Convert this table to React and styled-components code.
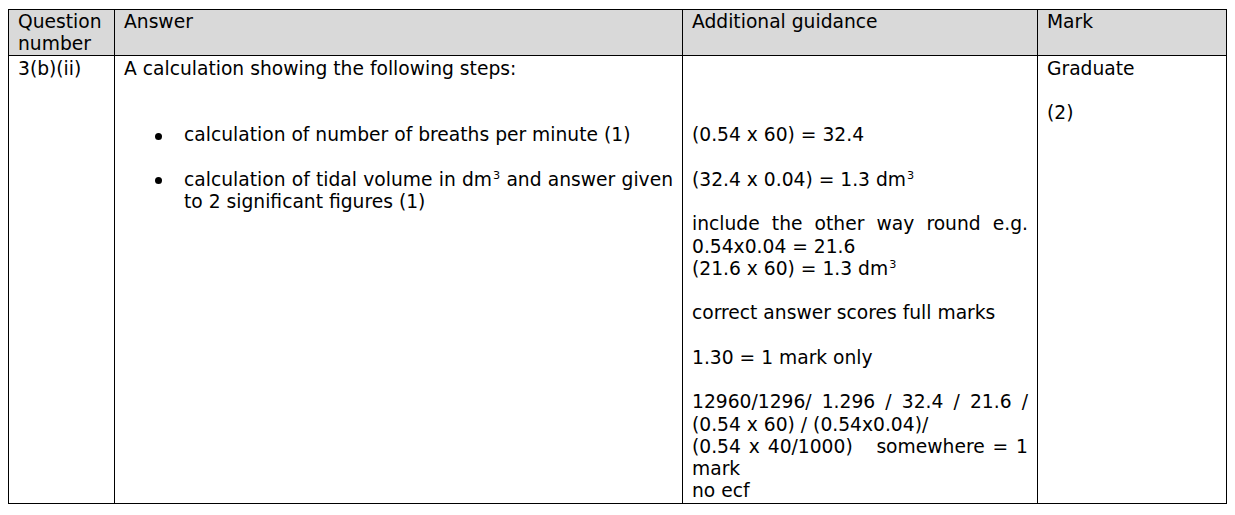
import React from "react";
import styled, { createGlobalStyle } from "styled-components";

const Global = createGlobalStyle`
  html, body { margin: 0; padding: 0; background: #ffffff; }
  body { padding: 9px 8px 0 8px; }
`;

const LH = "22.25px";

const Table = styled.table`
  border-collapse: collapse;
  width: 1218px;
  table-layout: fixed;
  font-family: "DejaVu Sans", Verdana, sans-serif;
  font-size: 18.7px;
  line-height: ${LH};
  color: #000;
`;

const Col = styled.col`
  width: ${(p) => p.$w}px;
`;

const HeadCell = styled.th`
  background: #d9d9d9;
  border: 1px solid #000;
  font-weight: normal;
  text-align: left;
  vertical-align: top;
  padding: 0.5px 9px 0 9px;
  white-space: nowrap;
`;

const Cell = styled.td`
  border: 1px solid #000;
  vertical-align: top;
  padding: 1.5px 9px 0 9px;
`;

const Line = styled.div`
  min-height: ${LH};
  white-space: nowrap;
`;

const JLine = styled.div`
  text-align: justify;
  text-align-last: justify;
  white-space: normal;
`;

const Blank = styled.div`
  height: calc(${LH} * ${(p) => p.$n || 1});
`;

const Sup = styled.sup`
  font-size: 0.6em;
  line-height: 0;
  vertical-align: 0.62em;
  margin-left: 1px;
`;

const List = styled.ul`
  list-style: none;
  margin: 0;
  padding: 0;
`;

const Item = styled.li`
  display: grid;
  grid-template-columns: 60px 1fr;
  margin-bottom: ${(p) => (p.$last ? 0 : LH)};
`;

const Dot = styled.span`
  display: flex;
  align-items: center;
  justify-content: flex-start;
  padding-left: 31px;
  height: ${LH};
  &::before {
    content: "";
    width: 7px;
    height: 7px;
    border-radius: 50%;
    background: #000;
    margin-top: 2px;
  }
`;

export default function App() {
  return (
    <>
      <Global />
      <Table>
        <colgroup>
          <Col $w={106} />
          <Col $w={568} />
          <Col $w={355} />
          <Col $w={189} />
        </colgroup>
        <thead>
          <tr>
            <HeadCell>
              <Line>Question</Line>
              <Line>number</Line>
            </HeadCell>
            <HeadCell>Answer</HeadCell>
            <HeadCell>Additional guidance</HeadCell>
            <HeadCell>Mark</HeadCell>
          </tr>
        </thead>
        <tbody>
          <tr>
            <Cell>3(b)(ii)</Cell>
            <Cell>
              <Line>A calculation showing the following steps:</Line>
              <Blank $n={2} />
              <List>
                <Item>
                  <Dot />
                  <div>calculation of number of breaths per minute (1)</div>
                </Item>
                <Item $last>
                  <Dot />
                  <div>
                    <JLine>
                      calculation of tidal volume in dm<Sup>3</Sup> and answer given
                    </JLine>
                    <Line>to 2 significant figures (1)</Line>
                  </div>
                </Item>
              </List>
            </Cell>
            <Cell>
              <Blank $n={3} />
              <Line>(0.54 x 60) = 32.4</Line>
              <Blank />
              <Line>
                (32.4 x 0.04) = 1.3 dm<Sup>3</Sup>
              </Line>
              <Blank />
              <JLine>include the other way round e.g.</JLine>
              <Line>0.54x0.04 = 21.6</Line>
              <Line>
                (21.6 x 60) = 1.3 dm<Sup>3</Sup>
              </Line>
              <Blank />
              <Line>correct answer scores full marks</Line>
              <Blank />
              <Line>1.30 = 1 mark only</Line>
              <Blank />
              <JLine>12960/1296/ 1.296 / 32.4 / 21.6 /</JLine>
              <Line>(0.54 x 60) / (0.54x0.04)/</Line>
              <JLine>(0.54 x 40/1000) &nbsp; somewhere = 1</JLine>
              <Line>mark</Line>
              <Line>no ecf</Line>
            </Cell>
            <Cell>
              <Line>Graduate</Line>
              <Blank />
              <Line>(2)</Line>
            </Cell>
          </tr>
        </tbody>
      </Table>
    </>
  );
}
